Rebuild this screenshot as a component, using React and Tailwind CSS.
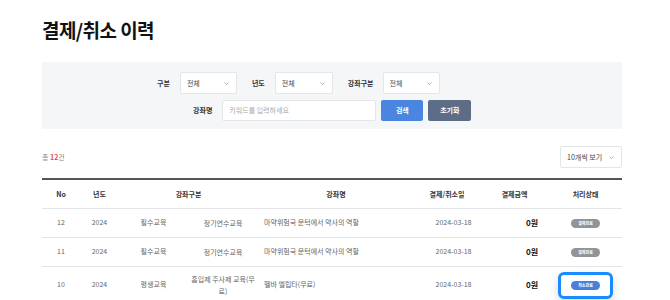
import React from 'react';

const font = { fontFamily: '"Noto Sans CJK KR", "Noto Sans", sans-serif' };

function Chevron({ className = '' }) {
  return (
    <svg viewBox="0 0 10 6" className={`w-[5px] h-[3px] ${className}`} fill="none" stroke="#888" strokeWidth="1.3">
      <path d="M1 1l4 4 4-4" />
    </svg>
  );
}

function Select({ label, w = 'w-[57px]' }) {
  return (
    <div className={`${w} h-[22px] bg-white border border-[#e3e5e8] rounded-[2px] flex items-center justify-between pl-[6px] pr-[7px]`}>
      <span className="text-[7px] text-[#444]">{label}</span>
      <Chevron />
    </div>
  );
}

const rows = [
  { no: 12, year: 2024, cat: '필수교육', sub: '정기연수교육', name: '마약위험국 문턱에서 약사의 역할', date: '2024-03-18', amt: '0원', status: '결제완료' },
  { no: 11, year: 2024, cat: '필수교육', sub: '정기연수교육', name: '마약위험국 문턱에서 약사의 역할', date: '2024-03-18', amt: '0원', status: '결제완료' },
  { no: 10, year: 2024, cat: '평생교육', sub: <>흡입제 주사제 교육(무<br />료)</>, name: '헬바 엘립타(무료)', date: '2024-03-18', amt: '0원', status: '취소완료', cancel: true },
];

export default function App() {
  return (
    <div style={font} className="w-[670px] h-[300px] overflow-hidden bg-white px-[42px] pt-[17px]">
      <h1 className="text-[19px] font-bold text-[#111] tracking-[-0.03em] leading-[26px]">결제/취소 이력</h1>

      <div className="mt-[19px] w-[580px] h-[67px] bg-[#f5f6f8] pt-[10px] flex flex-col gap-[6px]">
        <div className="flex items-center pl-[115px]">
          <span className="text-[7px] font-bold text-[#333] mr-[10px]">구분</span>
          <Select label="전체" />
          <span className="text-[7px] font-bold text-[#333] ml-[15px] mr-[10px]">년도</span>
          <Select label="전체" w="w-[58px]" />
          <span className="text-[7px] font-bold text-[#333] ml-[15px] mr-[9px]">강좌구분</span>
          <Select label="전체" />
        </div>
        <div className="flex items-center pl-[151px]">
          <span className="text-[7px] font-bold text-[#333] mr-[10px]">강좌명</span>
          <div className="w-[154px] h-[21px] bg-white border border-[#e3e5e8] rounded-[2px] flex items-center pl-[6px]">
            <span className="text-[7px] text-[#aaa]">키워드를 입력하세요</span>
          </div>
          <button className="ml-[5px] w-[42px] h-[21px] bg-[#4a86e0] rounded-[2px] text-white text-[7px] font-bold">검색</button>
          <button className="ml-[5px] w-[43px] h-[21px] bg-[#5e6d86] rounded-[2px] text-white text-[7px] font-bold">초기화</button>
        </div>
      </div>

      <div className="mt-[17px] w-[580px] flex items-center justify-between">
        <span className="text-[7px] text-[#888]">총 <span className="text-[#e84c4c] font-bold">12</span>건</span>
        <Select label="10개씩 보기" w="w-[62px]" />
      </div>

      <table className="mt-[10px] w-[580px] table-fixed border-t-2 border-[#555] text-[7px] text-[#666]">
        <colgroup>
          <col className="w-[38px]" />
          <col className="w-[39px]" />
          <col className="w-[69px]" />
          <col className="w-[70px]" />
          <col className="w-[156px]" />
          <col className="w-[66px]" />
          <col className="w-[69px]" />
          <col className="w-[73px]" />
        </colgroup>
        <thead>
          <tr className="h-[29px] border-b border-[#e2e4e8] text-[#333] font-bold">
            <th className="font-bold">No</th>
            <th className="font-bold">년도</th>
            <th className="font-bold" colSpan={2}>강좌구분</th>
            <th className="font-bold">강좌명</th>
            <th className="font-bold">결제/취소일</th>
            <th className="font-bold">결제금액</th>
            <th className="font-bold">처리상태</th>
          </tr>
        </thead>
        <tbody>
          {rows.map((r) => (
            <tr key={r.no} className={`border-b border-[#e2e4e8] ${r.cancel ? 'h-[37px]' : 'h-[29px]'}`}>
              <td className="text-center">{r.no}</td>
              <td className="text-center">{r.year}</td>
              <td className="text-center">{r.cat}</td>
              <td className="text-center leading-[12px]">{r.sub}</td>
              <td className="pl-[6px]">{r.name}</td>
              <td className="text-center pl-[13px]">{r.date}</td>
              <td className="text-right pr-[11px] text-[8px] font-bold text-[#111]">{r.amt}</td>
              <td className="text-center">
                {r.cancel ? (
                  <div className="relative inline-flex items-center justify-center">
                    <div className="absolute -left-[13px] -right-[13px] -top-[9px] -bottom-[9px] border-[3px] border-[#1a8cff] rounded-[6px] shadow-[0_4px_10px_rgba(0,0,0,0.15)] bg-white" />
                    <span className="relative inline-block w-[29px] h-[9px] leading-[9px] rounded-full bg-[#4a7fdc] text-white text-[4px] font-bold">{r.status}</span>
                  </div>
                ) : (
                  <span className="inline-block w-[29px] h-[9px] leading-[9px] rounded-full bg-[#8f949b] text-white text-[4px] font-bold">{r.status}</span>
                )}
              </td>
            </tr>
          ))}
        </tbody>
      </table>
    </div>
  );
}
